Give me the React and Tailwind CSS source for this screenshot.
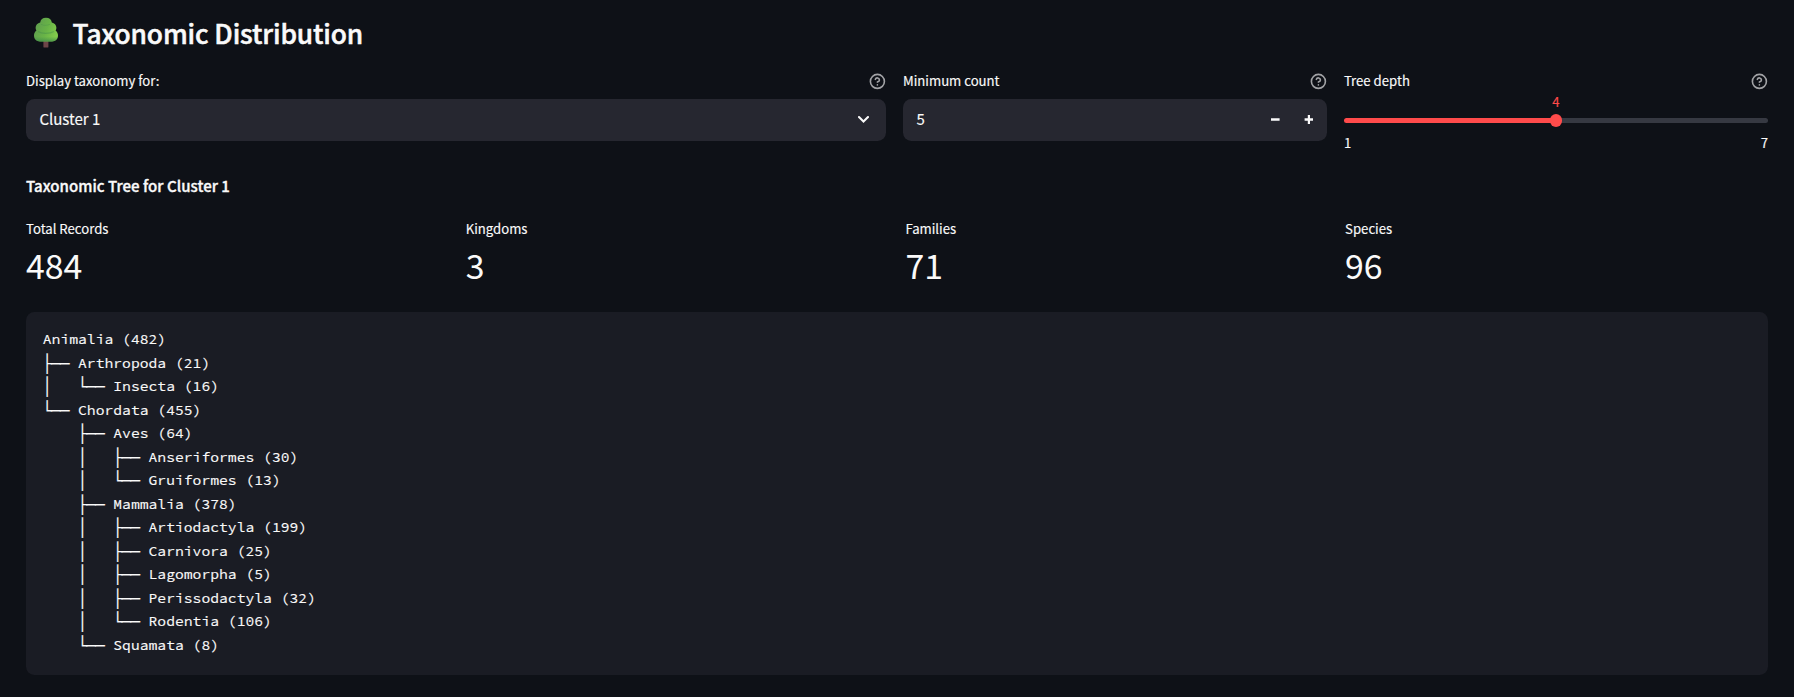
import { CircleHelp } from 'lucide-react';

const treeLines = [
  'Animalia (482)',
  '├── Arthropoda (21)',
  '│   └── Insecta (16)',
  '└── Chordata (455)',
  '    ├── Aves (64)',
  '    │   ├── Anseriformes (30)',
  '    │   └── Gruiformes (13)',
  '    ├── Mammalia (378)',
  '    │   ├── Artiodactyla (199)',
  '    │   ├── Carnivora (25)',
  '    │   ├── Lagomorpha (5)',
  '    │   ├── Perissodactyla (32)',
  '    │   └── Rodentia (106)',
  '    └── Squamata (8)',
];

const metrics = [
  { label: 'Total Records', value: '484' },
  { label: 'Kingdoms', value: '3' },
  { label: 'Families', value: '71' },
  { label: 'Species', value: '96' },
];

function TreeIcon() {
  return (
    <svg className="mt-px h-[31px] w-[26px] shrink-0" viewBox="0 0 26 31">
      <defs>
        <linearGradient id="crown" x1="0" y1="0.2" x2="1" y2="0.6">
          <stop offset="0" stopColor="#5d9a4f" />
          <stop offset="0.55" stopColor="#68b347" />
          <stop offset="1" stopColor="#83cc4c" />
        </linearGradient>
        <linearGradient id="shade" x1="0" y1="0" x2="0" y2="1">
          <stop offset="0.6" stopColor="#3f8a4a" stopOpacity="0" />
          <stop offset="1" stopColor="#3f8a4a" stopOpacity="0.75" />
        </linearGradient>
      </defs>
      <rect x="10.4" y="22" width="5" height="8.6" rx="0.9" fill="#6d4548" />
      <path
        d="M13 .8C9.6.8 7.5 2.8 7.2 5.6 4.6 6.2 2.600 8.200 2.600 10.800c0 1.100.3 2 .8 2.800C1.900 14.800 1 16.500 1 18.600c0 3.600 2.600 5.800 6 5.800h12c3.400 0 6-2.200 6-5.800 0-2.100-.9-3.800-2.400-5 .5-.8.8-1.700.8-2.800 0-2.600-2-4.600-4.600-5.200C18.500 2.800 16.400.8 13 .8Z"
        fill="url(#crown)"
      />
      <rect x="1" y="12.6" width="24" height="11.8" rx="5.8" fill="url(#shade)" />
      <path d="M5 14.6c4 2.4 11.5 2.4 16-.1" fill="none" stroke="#3f8a4a" strokeOpacity=".4" strokeWidth="1.2" />
      <path d="M8 7.3c2.5 1.4 6 1.4 9 0" fill="none" stroke="#3f8a4a" strokeOpacity=".3" strokeWidth="1" />
    </svg>
  );
}

function FieldLabel({ children }) {
  return (
    <div className="flex h-6 items-center justify-between text-[13.16px] leading-6">
      <span>{children}</span>
      <CircleHelp strokeWidth={2.3} className="mt-px size-[16.8px] text-[#a2a3a6]" />
    </div>
  );
}

export default function App() {
  return (
    <main className="h-[697px] bg-[#0e1117] px-[26px] pt-[14.5px] font-['Noto_Sans_CJK_SC',sans-serif] text-[#fafafa] [-webkit-text-stroke:0.15px]">
      <header className="flex h-[35.3px] items-center pl-[7px]">
        <TreeIcon />
        <h3 className="ml-[13.5px] text-[26.32px] leading-[35.3px] font-medium tracking-[-0.12px] [-webkit-text-stroke:0.5px]">
          Taxonomic Distribution
        </h3>
      </header>

      <section className="mt-[19px] grid grid-cols-[860.2fr_424.1fr_424.1fr] gap-[16.8px]">
        <div>
          <FieldLabel>Display taxonomy for:</FieldLabel>
          <div className="mt-[6.2px] flex h-[42px] items-center justify-between rounded-[8.4px] bg-[#262730] pr-[17px] pl-[13.4px]">
            <span className="pb-px text-[15.04px] leading-6">Cluster 1</span>
            <svg className="h-[7px] w-[11px]" viewBox="0 0 11 7" fill="none" stroke="#fafafa" strokeWidth="2.1">
              <path d="M1 1.1 5.5 5.5 10 1.1" strokeLinecap="round" />
            </svg>
          </div>
        </div>

        <div>
          <FieldLabel>Minimum count</FieldLabel>
          <div className="mt-[6.2px] flex h-[42px] items-center rounded-[8.4px] bg-[#262730] pr-[14px] pl-[13.4px]">
            <span className="flex-1 pb-px text-[15.04px] leading-6">5</span>
            <svg className="mb-px h-[9px] w-[43px]" viewBox="0 0 43 9" fill="#fafafa">
              <path d="M1 3.3h8.6v2.4H1ZM34.6 3.3h3.2V0h2.2v3.3h3v2.4h-3V9h-2.2V5.7h-3.2Z" />
            </svg>
          </div>
        </div>

        <div>
          <FieldLabel>Tree depth</FieldLabel>
          <div className="flex flex-col text-[13.16px]">
            <span className="h-[18px] text-center leading-[18px] text-[#ff4b4b]">4</span>
            <div className="mt-[3px] flex h-[13px] items-center">
              <span className="h-[4.5px] flex-1 rounded-l-full bg-[#ff4b4b]" />
              <span className="relative z-10 -mx-[6.3px] size-[12.6px] shrink-0 rounded-full bg-[#ff4b4b]" />
              <span className="h-[4.5px] flex-1 rounded-r-full bg-[#363942]" />
            </div>
            <div className="mt-[4.5px] flex justify-between leading-6">
              <span>1</span>
              <span>7</span>
            </div>
          </div>
        </div>
      </section>

      <h5 className="mt-[17px] text-[15.04px] leading-[27px] font-medium tracking-[0.03px] [-webkit-text-stroke:0.35px]">
        Taxonomic Tree for Cluster 1
      </h5>

      <section className="mt-[17.8px] grid grid-cols-4 gap-[16.8px]">
        {metrics.map((m) => (
          <div key={m.label} className="flex flex-col">
            <span className="text-[13.16px] leading-6">{m.label}</span>
            <span className="text-[33.84px] leading-[47px] [-webkit-text-stroke:0]">{m.value}</span>
          </div>
        ))}
      </section>

      <pre className="mt-[23.8px] h-[363px] rounded-[8.4px] bg-[#1a1c24] px-[16.8px] pt-[16.3px] font-['Source_Code_Pro','DejaVu_Sans_Mono',monospace] text-[14.7px] leading-[23.52px]">
        {treeLines.join('\n')}
      </pre>
    </main>
  );
}
